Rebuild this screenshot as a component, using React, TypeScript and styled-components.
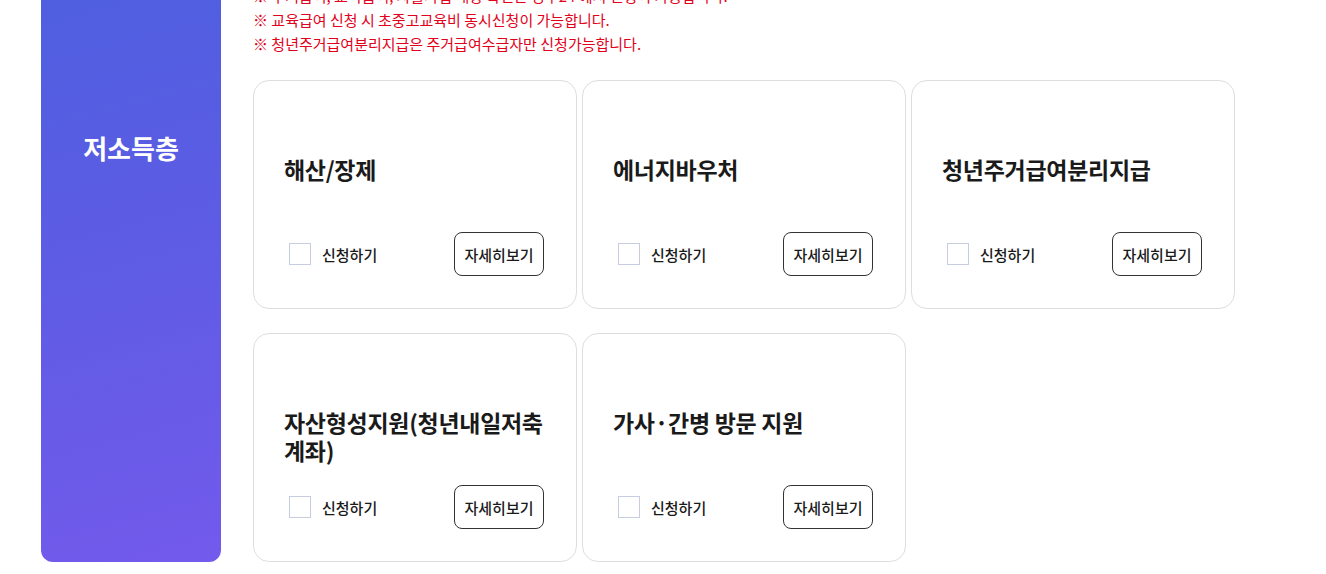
import React, { useState } from 'react'
import styled, { createGlobalStyle } from 'styled-components'

const GlobalStyle = createGlobalStyle`
  * { box-sizing: border-box; }
  html, body { margin: 0; padding: 0; background: #fff; overflow: hidden; }
  body { font-family: "Noto Sans CJK KR", "Noto Sans", sans-serif; color: #1a1a1a; }
`

type Benefit = {
  id: string;
  title: string;
}

const notices = [
  '※ 주거급여, 교육급여, 자활사업 대상 확인은 정부24 에서 신청이 가능합니다.',
  '※ 교육급여 신청 시 초중고교육비 동시신청이 가능합니다.',
  '※ 청년주거급여분리지급은 주거급여수급자만 신청가능합니다.',
]

const benefits: Benefit[] = [
  { id: 'funeral', title: '해산/장제' },
  { id: 'energy', title: '에너지바우처' },
  { id: 'youth-housing', title: '청년주거급여분리지급' },
  { id: 'asset', title: '자산형성지원(청년내일저축계좌)' },
  { id: 'care', title: '가사·간병 방문 지원' },
]

const BenefitCard: React.FC<{ item: Benefit; checked: boolean; onToggle: (id: string) => void }> = ({ item, checked, onToggle }) => {
  return (
    <ScCard>
      <h3>{item.title}</h3>
      <CardFoot>
        <CheckLabel onClick={() => onToggle(item.id)}>
          <CheckBox $checked={checked} />
          신청하기
        </CheckLabel>
        <DetailButton type='button'>자세히보기</DetailButton>
      </CardFoot>
    </ScCard>
  )
}

const App: React.FC = () => {
  const [picked, setPicked] = useState<string[]>([])

  const toggle = (id: string) => {
    setPicked(prev => prev.includes(id) ? prev.filter(p => p !== id) : [...prev, id])
  }

  return (
    <>
      <GlobalStyle />
      <ScSection>
        <CategoryPanel>저소득층</CategoryPanel>
        <Content>
          <NoticeList>
            {notices.map(n => <li key={n}>{n}</li>)}
          </NoticeList>
          <CardGrid>
            {benefits.map(b =>
              <BenefitCard key={b.id} item={b} checked={picked.includes(b.id)} onToggle={toggle} />
            )}
          </CardGrid>
        </Content>
      </ScSection>
    </>
  )
}

const ScSection = styled.section`
  display: flex;
  align-items: stretch;
  gap: 32px;
  margin-top: -16px;
  padding-left: 41px;
`

const CategoryPanel = styled.div`
  flex: 0 0 180px;
  padding-top: 148px;
  text-align: center;
  font-size: 26px;
  line-height: 32px;
  font-weight: 700;
  color: #fff;
  border-radius: 0 0 12px 12px;
  background: linear-gradient(165deg, #4e5fdf 0%, #5d5ce4 45%, #735aec 100%);
`

const Content = styled.div`
  display: flex;
  flex-direction: column;
  gap: 24px;
`

const NoticeList = styled.ul`
  margin: 0;
  padding: 0;
  list-style: none;
  li {
    font-size: 15px;
    line-height: 24px;
    color: #e2001a;
    white-space: nowrap;
  }
`

const CardGrid = styled.div`
  display: grid;
  grid-template-columns: repeat(3, 324px);
  column-gap: 5px;
  row-gap: 24px;
`

const ScCard = styled.div`
  display: flex;
  flex-direction: column;
  height: 229px;
  padding: 74px 32px 32px 30px;
  border: 1px solid #dedede;
  border-radius: 16px;
  background: #fff;

  h3 {
    margin: 0;
    font-size: 23px;
    line-height: 28px;
    font-weight: 700;
    letter-spacing: -0.3px;
    color: #1a1a1a;
  }
`

const CardFoot = styled.div`
  display: flex;
  align-items: center;
  justify-content: space-between;
  margin-top: auto;
`

const CheckLabel = styled.label`
  display: flex;
  align-items: center;
  gap: 11px;
  padding-left: 5px;
  font-size: 15px;
  font-weight: 500;
  color: #1a1a1a;
  cursor: pointer;
`

const CheckBox = styled.span<{ $checked: boolean }>`
  display: block;
  width: 22px;
  height: 22px;
  border: 1px solid #c6cde0;
  background: ${p => p.$checked ? '#5b5ce4' : '#fff'};
`

const DetailButton = styled.button`
  width: 90px;
  height: 44px;
  padding: 0;
  border: 1px solid #333;
  border-radius: 8px;
  background: #fff;
  font-family: inherit;
  font-size: 15px;
  font-weight: 500;
  color: #1a1a1a;
  cursor: pointer;
`

export default App
